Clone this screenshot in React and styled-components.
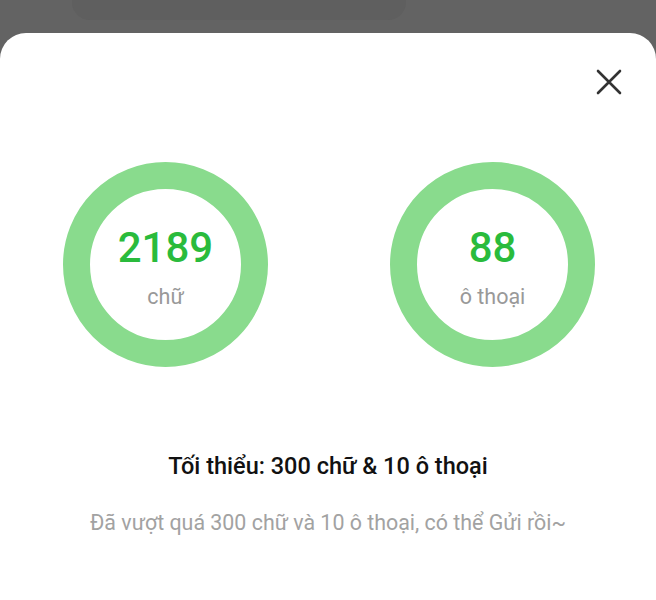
import React from 'react';
import styled, { createGlobalStyle } from 'styled-components';

const GlobalStyle = createGlobalStyle`
  html, body {
    margin: 0;
    padding: 0;
    background: #636363;
    font-family: Roboto, "Noto Sans", sans-serif;
  }
`;

const Page = styled.div`
  width: 656px;
  height: 600px;
  overflow: hidden;
  display: flex;
  flex-direction: column;
`;

const Backdrop = styled.div`
  height: 33px;
  flex-shrink: 0;
  display: flex;
  justify-content: flex-start;
  padding-left: 72px;
`;

const BehindCard = styled.div`
  width: 334px;
  height: 20px;
  background: #5f5f5f;
  border-radius: 0 0 18px 18px;
`;

const Sheet = styled.div`
  flex: 1;
  background: #fff;
  border-radius: 26px 26px 0 0;
  display: flex;
  flex-direction: column;
  align-items: center;
  position: relative;
`;

const CloseButton = styled.button`
  position: absolute;
  top: 35px;
  right: 33px;
  width: 28px;
  height: 28px;
  padding: 0;
  border: none;
  background: none;
  display: flex;
  align-items: center;
  justify-content: center;
`;

const Stats = styled.div`
  margin-top: 129px;
  width: 100%;
  display: flex;
  justify-content: space-between;
  padding: 0 61px 0 63px;
  box-sizing: border-box;
`;

const Ring = styled.div`
  width: 205px;
  height: 205px;
  box-sizing: border-box;
  border: 27px solid #89db8d;
  border-radius: 50%;
  display: flex;
  flex-direction: column;
  align-items: center;
  justify-content: center;
`;

const Count = styled.div`
  color: #2abb3c;
  font-size: 42px;
  font-weight: 500;
  line-height: 48px;
  margin-top: 4px;
`;

const Unit = styled.div`
  color: #999;
  font-size: 21.5px;
  line-height: 26px;
  margin-top: 12px;
`;

const Rule = styled.div`
  margin-top: 85px;
  color: #111;
  font-size: 23.5px;
  font-weight: 500;
  line-height: 28px;
`;

const Hint = styled.div`
  margin-top: 30px;
  color: #a2a2a2;
  font-size: 21.4px;
  line-height: 26px;
`;

const CloseIcon = () => (
  <svg width="26" height="26" viewBox="0 0 26 26">
    <path d="M2 2 L24 24 M24 2 L2 24" stroke="#333" strokeWidth="2.6" strokeLinecap="round" />
  </svg>
);

const stats = [
  { value: 2189, unit: 'chữ' },
  { value: 88, unit: 'ô thoại' },
];

const App = () => (
  <Page>
    <GlobalStyle />
    <Backdrop>
      <BehindCard />
    </Backdrop>
    <Sheet>
      <CloseButton aria-label="Đóng">
        <CloseIcon />
      </CloseButton>
      <Stats>
        {stats.map(s => (
          <Ring key={s.unit}>
            <Count>{s.value}</Count>
            <Unit>{s.unit}</Unit>
          </Ring>
        ))}
      </Stats>
      <Rule>Tối thiểu: 300 chữ &amp; 10 ô thoại</Rule>
      <Hint>Đã vượt quá 300 chữ và 10 ô thoại, có thể Gửi rồi~</Hint>
    </Sheet>
  </Page>
);

export default App;
